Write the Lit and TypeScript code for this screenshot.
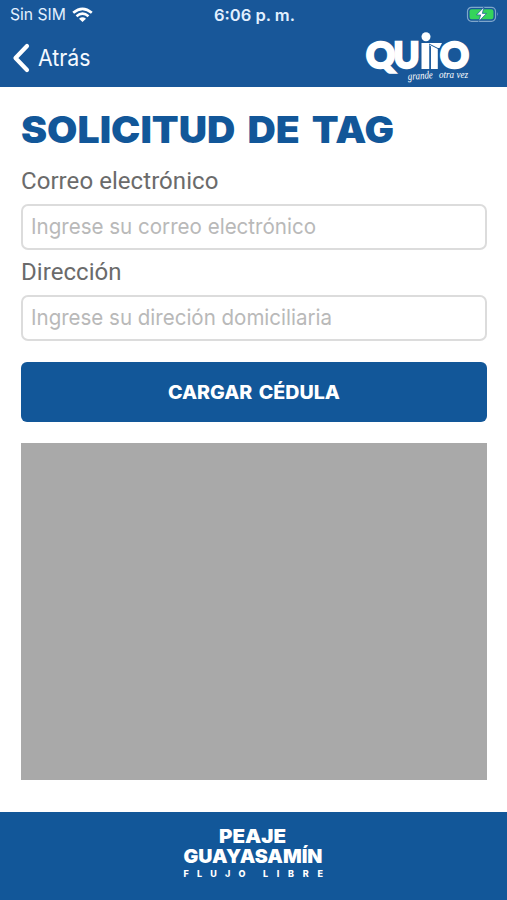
import { LitElement, html, css } from "lit";
import { customElement } from "lit/decorators.js";

@customElement("app-root")
export class AppRoot extends LitElement {
  static styles = css`
    :host { display: flex; flex-direction: column; height: 900px; background: #fff; font-family: Inter, sans-serif; overflow: hidden; }
    * { box-sizing: border-box; }
    header { flex: none; height: 87px; background: #185799; color: #fff; display: flex; flex-direction: column; }
    .status { height: 30px; display: grid; grid-template-columns: 1fr auto 1fr; align-items: center; padding: 0 9px 0 10px; }
    .carrier { display: flex; align-items: center; gap: 2px; }
    .clock { padding-left: 5px; }
    .battery { justify-self: end; }
    .nav { flex: 1; display: flex; justify-content: space-between; }
    .back { display: flex; align-items: center; gap: 8px; height: 56px; padding-left: 12px; }
    svg { display: block; overflow: visible; }
    .logo { margin: 0 34px 0 0; }
    svg text { white-space: pre; }
    main { flex: 1; display: flex; flex-direction: column; padding: 0 20px 0 21px; }
    h1 { margin: 22px 0 0; height: 42px; word-spacing: 4px; }
    label { display: block; height: 26px; font: 24px/26px Roboto, sans-serif; color: #6b6b6b; letter-spacing: 0.06px; }
    .first { margin-top: 17px; }
    .field { height: 46px; margin: 10px 0 9px; border: 2px solid #dcdcdc; border-radius: 7px; display: flex; align-items: center; padding-left: 8px; }
    .button { height: 60px; margin-top: 12px; padding-left: 4px; background: #125799; border-radius: 6px; display: flex; align-items: center; justify-content: center; word-spacing: 2px; }
    .photo { height: 337px; margin-top: 21px; background: #a9a9a9; }
    footer { flex: none; height: 88px; background: #125799; display: flex; justify-content: center; padding-top: 12px; }
  `;

  private line(text: string, width: number, size: number, weight: number, color: string, height: number, baseline: number) {
    return html`<svg width=${width + 4} height=${height} font-size=${size} font-weight=${weight} fill=${color}>
      <text x="0" y=${baseline} textLength=${width} lengthAdjust="spacingAndGlyphs">${text}</text>
    </svg>`;
  }

  render() {
    return html`
      <header>
        <div class="status">
          <div class="carrier">
            ${this.line("Sin SIM", 56, 16.5, 400, "#e2f0ff", 20, 15.2)}
            <svg width="21" height="16" viewBox="0 0 21 16" fill="none" stroke="#fff" stroke-width="2.6">
              <path d="M1.2 5.8Q10.5-2.2 19.8 5.8M4.5 9.2Q10.5 4 16.5 9.2" />
              <path d="M10.5 15 7 11.7Q10.5 8.8 14 11.7Z" fill="#fff" stroke="none" />
            </svg>
          </div>
          <div class="clock">${this.line("6:06 p. m.", 81, 16, 600, "#e2f0ff", 20, 15.6)}</div>
          <svg class="battery" width="32" height="18" viewBox="0 0 32 18">
            <rect x="1.5" y="1.3" width="28" height="14" rx="4" fill="none" stroke="#7fa6cb" stroke-width="1.2" />
            <rect x="3.5" y="3.3" width="24" height="10" rx="2.2" fill="#35d45b" />
            <path d="M31 6q1.8 2.3 0 4.6Z" fill="#7fa6cb" />
            <path d="M18 1 10.5 8.9h4.2L12.6 15.6 20.5 7.4h-4.2Z" fill="#fff" stroke="#185799" stroke-width=".7" />
          </svg>
        </div>
        <div class="nav">
          <div class="back">
            <svg width="18" height="30" viewBox="0 0 18 30" fill="none" stroke="#fff" stroke-width="4.2" stroke-linecap="round" stroke-linejoin="round">
              <path d="M15 3 3.5 15l11.5 12" />
            </svg>
            ${this.line("Atrás", 52.5, 22.5, 400, "#f4f9ff", 30, 23)}
          </div>
          <svg class="logo" width="110" height="57" viewBox="363 30 110 57" fill="#fff" font-family="Lato, sans-serif" font-weight="900" font-size="35.5">
            <g stroke="#fff" stroke-width="2.4">
              <text x="366" y="67.5" textLength="29" lengthAdjust="spacingAndGlyphs">Q</text>
              <text x="393.5" y="67.5" textLength="26" lengthAdjust="spacingAndGlyphs">U</text>
              <text x="440" y="67.5" textLength="29" lengthAdjust="spacingAndGlyphs">O</text>
            </g>
            <circle cx="426" cy="36.8" r="4.5" />
            <path d="M421.5 43h7.8v26h-7.8ZM429 43h13l-2.5 5h-1.7v21h-7V48Z" />
            <path d="m429 44 9.5 4.8M430.3 46v23" stroke="#185799" stroke-width="1" />
            <text x="408" y="80" font-family="'Liberation Serif', serif" font-style="italic" font-size="11" font-weight="400" textLength="25" lengthAdjust="spacingAndGlyphs" transform="rotate(-4 408 80)">grande</text>
            <text x="439" y="78" font-family="'Liberation Serif', serif" font-style="italic" font-size="10.5" font-weight="400" textLength="29" lengthAdjust="spacingAndGlyphs">otra vez</text>
          </svg>
        </div>
      </header>
      <main>
        <h1>${this.line("SOLICITUD DE TAG", 373, 36.5, 900, "#125799", 42, 33.8)}</h1>
        <label class="first">Correo electrónico</label>
        <div class="field">${this.line("Ingrese su correo electrónico", 285, 21.8, 400, "#b9b9b9", 34, 24)}</div>
        <label>Dirección</label>
        <div class="field">${this.line("Ingrese su direción domiciliaria", 301, 21.8, 400, "#b9b9b9", 34, 24)}</div>
        <div class="button">${this.line("CARGAR CÉDULA", 172, 18.5, 800, "#fff", 30, 21.5)}</div>
        <div class="photo"></div>
      </main>
      <footer>
        <svg width="144" height="60" viewBox="182 824 144 60" fill="#fff" font-weight="900">
          <text x="219" y="842.8" font-size="19" textLength="67" lengthAdjust="spacingAndGlyphs">PEAJE</text>
          <text x="183.5" y="863" font-size="19" textLength="139" lengthAdjust="spacingAndGlyphs">GUAYASAMÍN</text>
          <g font-size="9" font-weight="800">
            <text x="183.5" y="877" textLength="62">FLUJO</text>
            <text x="263" y="877" textLength="60">LIBRE</text>
          </g>
        </svg>
      </footer>
    `;
  }
}
